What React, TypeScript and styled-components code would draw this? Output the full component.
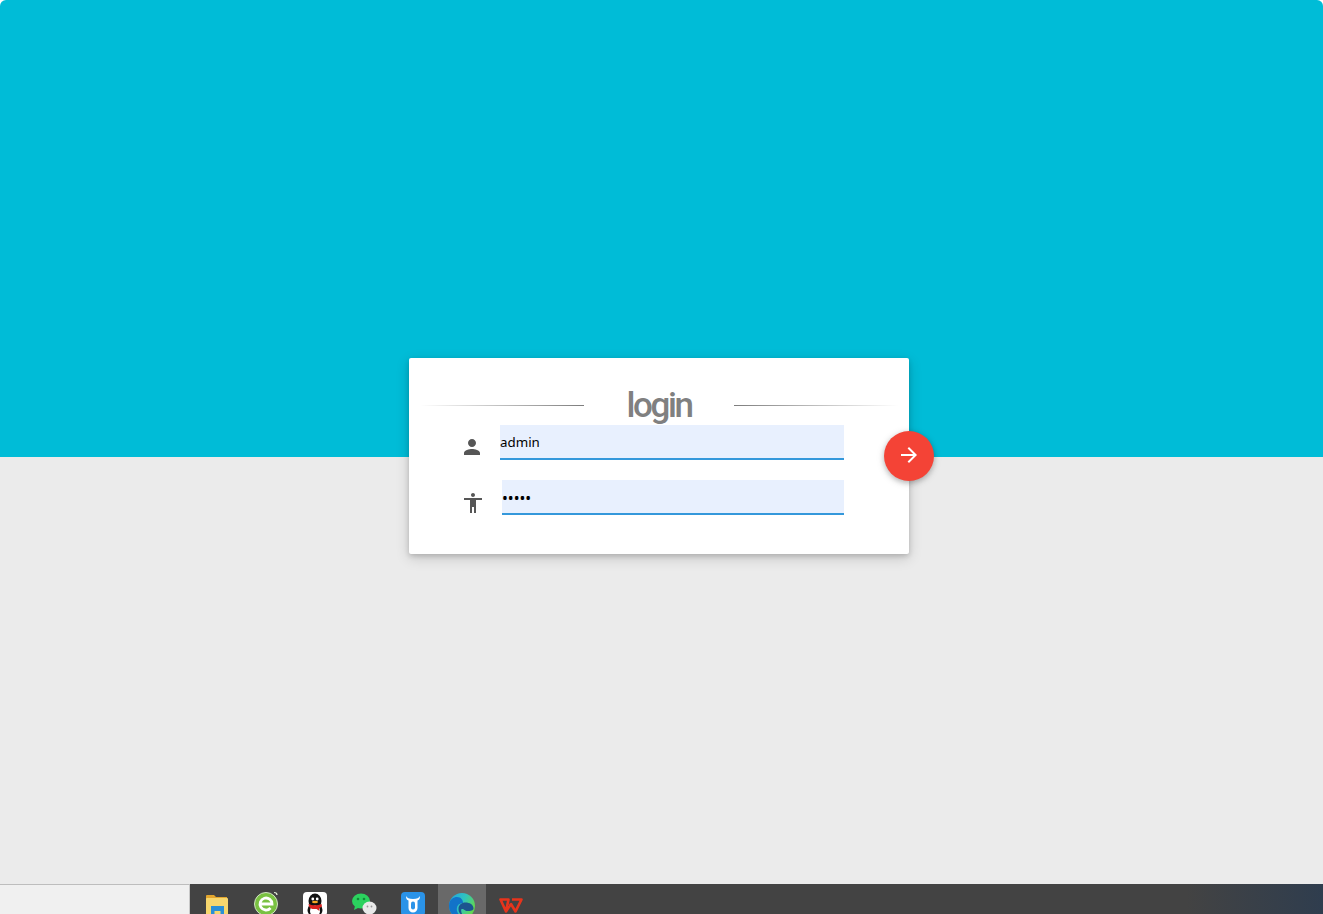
import { createGlobalStyle } from "styled-components";
import styled from "styled-components";

const GlobalStyle = createGlobalStyle`
  html, body {
    margin: 0;
    height: 100%;
    background: #fff;
  }
  #root {
    height: 100%;
  }
`;

const icons = {
  person:
    "M12 12c2.21 0 4-1.79 4-4s-1.79-4-4-4-4 1.79-4 4 1.79 4 4 4zm0 2c-2.67 0-8 1.34-8 4v2h16v-2c0-2.66-5.33-4-8-4z",
  accessibility:
    "M12 2c1.1 0 2 .9 2 2s-.9 2-2 2-2-.9-2-2 .9-2 2-2zm9 7h-6v13h-2v-6h-2v6H9V9H3V7h18v2z",
  arrow: "M12 4l-1.41 1.41L16.17 11H4v2h12.17l-5.58 5.59L12 20l8-8z",
};

const Glyph = ({ d }: { d: string }) => (
  <svg width="24" height="24" viewBox="0 0 24 24" fill="currentColor">
    <path d={d} />
  </svg>
);

export default function App() {
  return (
    <>
      <GlobalStyle />
      <Page>
        <Hero />
        <Lower>
          <Card>
            <Header>
              <FadeLine $to="left" />
              <Title>login</Title>
              <FadeLine $to="right" />
            </Header>
            <Row $nudge={1}>
              <RowIcon>
                <Glyph d={icons.person} />
              </RowIcon>
              <Field type="text" defaultValue="admin" />
            </Row>
            <Row $indent={1} $gap={17}>
              <RowIcon>
                <Glyph d={icons.accessibility} />
              </RowIcon>
              <Field type="password" defaultValue="admin" />
            </Row>
            <Fab aria-label="login">
              <Glyph d={icons.arrow} />
            </Fab>
          </Card>
        </Lower>
        <Taskbar>
          <SearchBox />
          <Tray>
            <TrayItem $top={10}>
              <svg width="24" height="24" viewBox="0 0 24 24">
                <path d="M1 2a1 1 0 0 1 1-1h7l2 2h11v6H1z" fill="#e3a62e" />
                <rect x="1" y="4" width="22" height="20" rx="1" fill="#f7d76e" />
                <rect x="6" y="12" width="13" height="12" fill="#2b8fd6" />
                <rect x="9.500" y="17" width="6" height="7" fill="#f7d76e" />
              </svg>
            </TrayItem>
            <TrayItem $top={7}>
              <svg width="26" height="26" viewBox="0 0 26 26">
                <circle cx="13" cy="13" r="11.500" fill="#79c141" stroke="#d2e3c4" strokeWidth="1" />
                <path
                  d="M7 13H19A6 6 0 1 0 17.500 17"
                  fill="none"
                  stroke="#fff"
                  strokeWidth="2.800"
                />
                <path d="M21 1.500c2 0 3 1 3 2.500" fill="none" stroke="#e4efd9" strokeWidth="1.200" />
              </svg>
            </TrayItem>
            <TrayItem>
              <AppTile $bg="#fff">
                <svg width="24" height="24" viewBox="0 0 24 24">
                  <ellipse cx="12" cy="9" rx="6.500" ry="7.500" fill="#111" />
                  <ellipse cx="12" cy="18" rx="7.500" ry="7" fill="#111" />
                  <ellipse cx="12" cy="19" rx="5" ry="5.500" fill="#fff" />
                  <circle cx="9.800" cy="7" r="1.400" fill="#fff" />
                  <circle cx="14.200" cy="7" r="1.400" fill="#fff" />
                  <ellipse cx="12" cy="10" rx="3" ry="1.300" fill="#f5a623" />
                  <path d="M5.500 12c4 1.800 9 1.800 13 0l.5 2.500c-1 .8-2 1.300-3 1.600l.5 3-3-2.200H9.500C7.500 16.500 5.500 15 5.500 12z" fill="#d9231f" />
                </svg>
              </AppTile>
            </TrayItem>
            <TrayItem $top={9}>
              <svg width="26" height="24" viewBox="0 0 26 24">
                <ellipse cx="10" cy="8" rx="9" ry="7.500" fill="#2bd25e" />
                <path d="M4 13l-1 4 5-2.500z" fill="#2bd25e" />
                <ellipse cx="18.500" cy="15" rx="7" ry="6.500" fill="#e9e9e9" />
                <circle cx="7" cy="6" r="1.300" fill="#128a3a" />
                <circle cx="13" cy="6" r="1.300" fill="#128a3a" />
                <circle cx="16.500" cy="13.500" r=".9" fill="#999" />
                <circle cx="20.500" cy="13.500" r=".9" fill="#999" />
              </svg>
            </TrayItem>
            <TrayItem>
              <AppTile $bg="#2a93e8">
                <svg width="24" height="24" viewBox="0 0 24 24">
                  <path
                    d="M5 4C5 7 6 8 7.500 8.500V16a4.500 4.500 0 0 0 9 0V8.500C18 8 19 7 19 4 18 6 16 7 12 7S6 6 5 4z"
                    fill="#fff"
                  />
                  <rect x="10" y="9.500" width="4" height="8" rx="2" fill="#2a93e8" />
                </svg>
              </AppTile>
            </TrayItem>
            <TrayItem $active>
              <svg width="28" height="28" viewBox="0 0 28 28">
                <defs>
                  <linearGradient id="edgeTop" x1="0" y1="0" x2="1" y2="0.500">
                    <stop offset="0" stopColor="#1fa3e4" />
                    <stop offset="0.550" stopColor="#2fc3c0" />
                    <stop offset="1" stopColor="#62d84f" />
                  </linearGradient>
                </defs>
                <circle cx="14" cy="14" r="13" fill="url(#edgeTop)" />
                <path d="M1 14C1 7 6 5 9 5c4 0 6 3 6 6-4 0-7 3-6 8 1 4 6 7 11 7-9 4-19-3-19-12z" fill="#1273c9" />
                <path d="M10.500 17c0-4 3-6.500 7-6.500 4 0 8 2 8 6 0 2-3 2.500-6 2.500-3 0-3-2-5.500-2-1.500 0-1 4 1 6.500-3-1-4.500-3.500-4.500-6.500z" fill="#1c548f" />
              </svg>
            </TrayItem>
            <TrayItem $top={13}>
              <svg width="26" height="17" viewBox="0 0 26 17">
                <path
                  d="M2.500 2.500H10.500L8 14.500zM14 2.500H23.500L17.500 14.500L13 7L8 14.500"
                  fill="none"
                  stroke="#e8341c"
                  strokeWidth="2.600"
                  strokeLinejoin="round"
                />
              </svg>
            </TrayItem>
          </Tray>
        </Taskbar>
      </Page>
    </>
  );
}

const Page = styled.div`
  display: flex;
  flex-direction: column;
  height: 914px;
  overflow: hidden;
  background: #fff;
`;

const Hero = styled.div`
  height: 457px;
  flex-shrink: 0;
  background: #00bcd7;
  border-radius: 6px 6px 0 0;
`;

const Lower = styled.div`
  position: relative;
  flex: 1;
  background: #ebebeb;
`;

const Card = styled.div`
  position: absolute;
  top: -99px;
  left: 409px;
  box-sizing: border-box;
  width: 500px;
  height: 196px;
  background: #fff;
  border-radius: 2px;
  box-shadow: 0 2px 5px rgba(0, 0, 0, 0.16), 0 4px 14px rgba(0, 0, 0, 0.16);
`;

const Header = styled.div`
  display: grid;
  grid-template-columns: 1fr 150px 1fr;
  align-items: center;
  box-sizing: border-box;
  height: 67px;
  padding: 27px 11px 0;
`;

const FadeLine = styled.div<{ $to: "left" | "right" }>`
  height: 1px;
  background: linear-gradient(
    to ${(p) => p.$to},
    #7d7d7d,
    rgba(125, 125, 125, 0)
  );
`;

const Title = styled.h1`
  margin: 1px 0 -1px;
  font-family: Roboto, "Liberation Sans", sans-serif;
  font-size: 35px;
  font-weight: 500;
  line-height: 40px;
  letter-spacing: -2.4px;
  text-align: center;
  color: #808080;
`;

const Row = styled.div<{ $indent?: number; $gap?: number; $nudge?: number }>`
  display: flex;
  align-items: flex-end;
  gap: ${(p) => p.$gap ?? 16}px;
  height: 35px;
  margin: 0 65px 20px ${(p) => 51 + (p.$indent ?? 0)}px;

  > span {
    margin-bottom: ${(p) => p.$nudge ?? 0}px;
  }
`;

const RowIcon = styled.span`
  display: flex;
  flex-shrink: 0;
  width: 24px;
  height: 24px;
  color: #565656;
`;

const Field = styled.input`
  flex: 1;
  min-width: 0;
  box-sizing: border-box;
  height: 35px;
  padding: 0;
  border: none;
  border-bottom: 2px solid #3498db;
  outline: none;
  background: #e8f0fe;
  font-family: "Noto Sans", "Open Sans", sans-serif;
  font-size: 13.33px;
  color: #000;

  &[type="password"] {
    padding-top: 3px;
    font-size: 15.5px;
  }
`;

const Fab = styled.button`
  position: absolute;
  top: 73px;
  right: -25px;
  display: flex;
  align-items: center;
  justify-content: center;
  width: 50px;
  height: 50px;
  padding: 0 0 2px;
  border: none;
  border-radius: 50%;
  background: #f44336;
  color: #fff;
  box-shadow: 0 2px 5px rgba(0, 0, 0, 0.2), 0 2px 8px rgba(0, 0, 0, 0.14);
`;

const Taskbar = styled.div`
  display: flex;
  flex-shrink: 0;
  height: 30px;
`;

const SearchBox = styled.div`
  flex-shrink: 0;
  box-sizing: border-box;
  width: 190px;
  background: #f0f0f0;
  border-top: 1px solid #bdbdbd;
  border-right: 1px solid #c8c8c8;
`;

const Tray = styled.div`
  display: flex;
  flex: 1;
  padding-left: 2px;
  background: linear-gradient(
    to right,
    #434343 0,
    #434343 88%,
    #2f3d4e 100%
  );
`;

const TrayItem = styled.div<{ $active?: boolean; $top?: number }>`
  display: flex;
  justify-content: center;
  box-sizing: border-box;
  width: ${(p) => (p.$active ? 48 : 49)}px;
  margin-left: ${(p) => (p.$active ? 1 : 0)}px;
  padding-top: ${(p) => p.$top ?? 8}px;
  overflow: hidden;
  background: ${(p) => (p.$active ? "#696969" : "transparent")};

  svg {
    flex-shrink: 0;
  }
`;

const AppTile = styled.div<{ $bg: string }>`
  display: flex;
  flex-shrink: 0;
  width: 24px;
  height: 24px;
  border-radius: 4px;
  background: ${(p) => p.$bg};
`;
